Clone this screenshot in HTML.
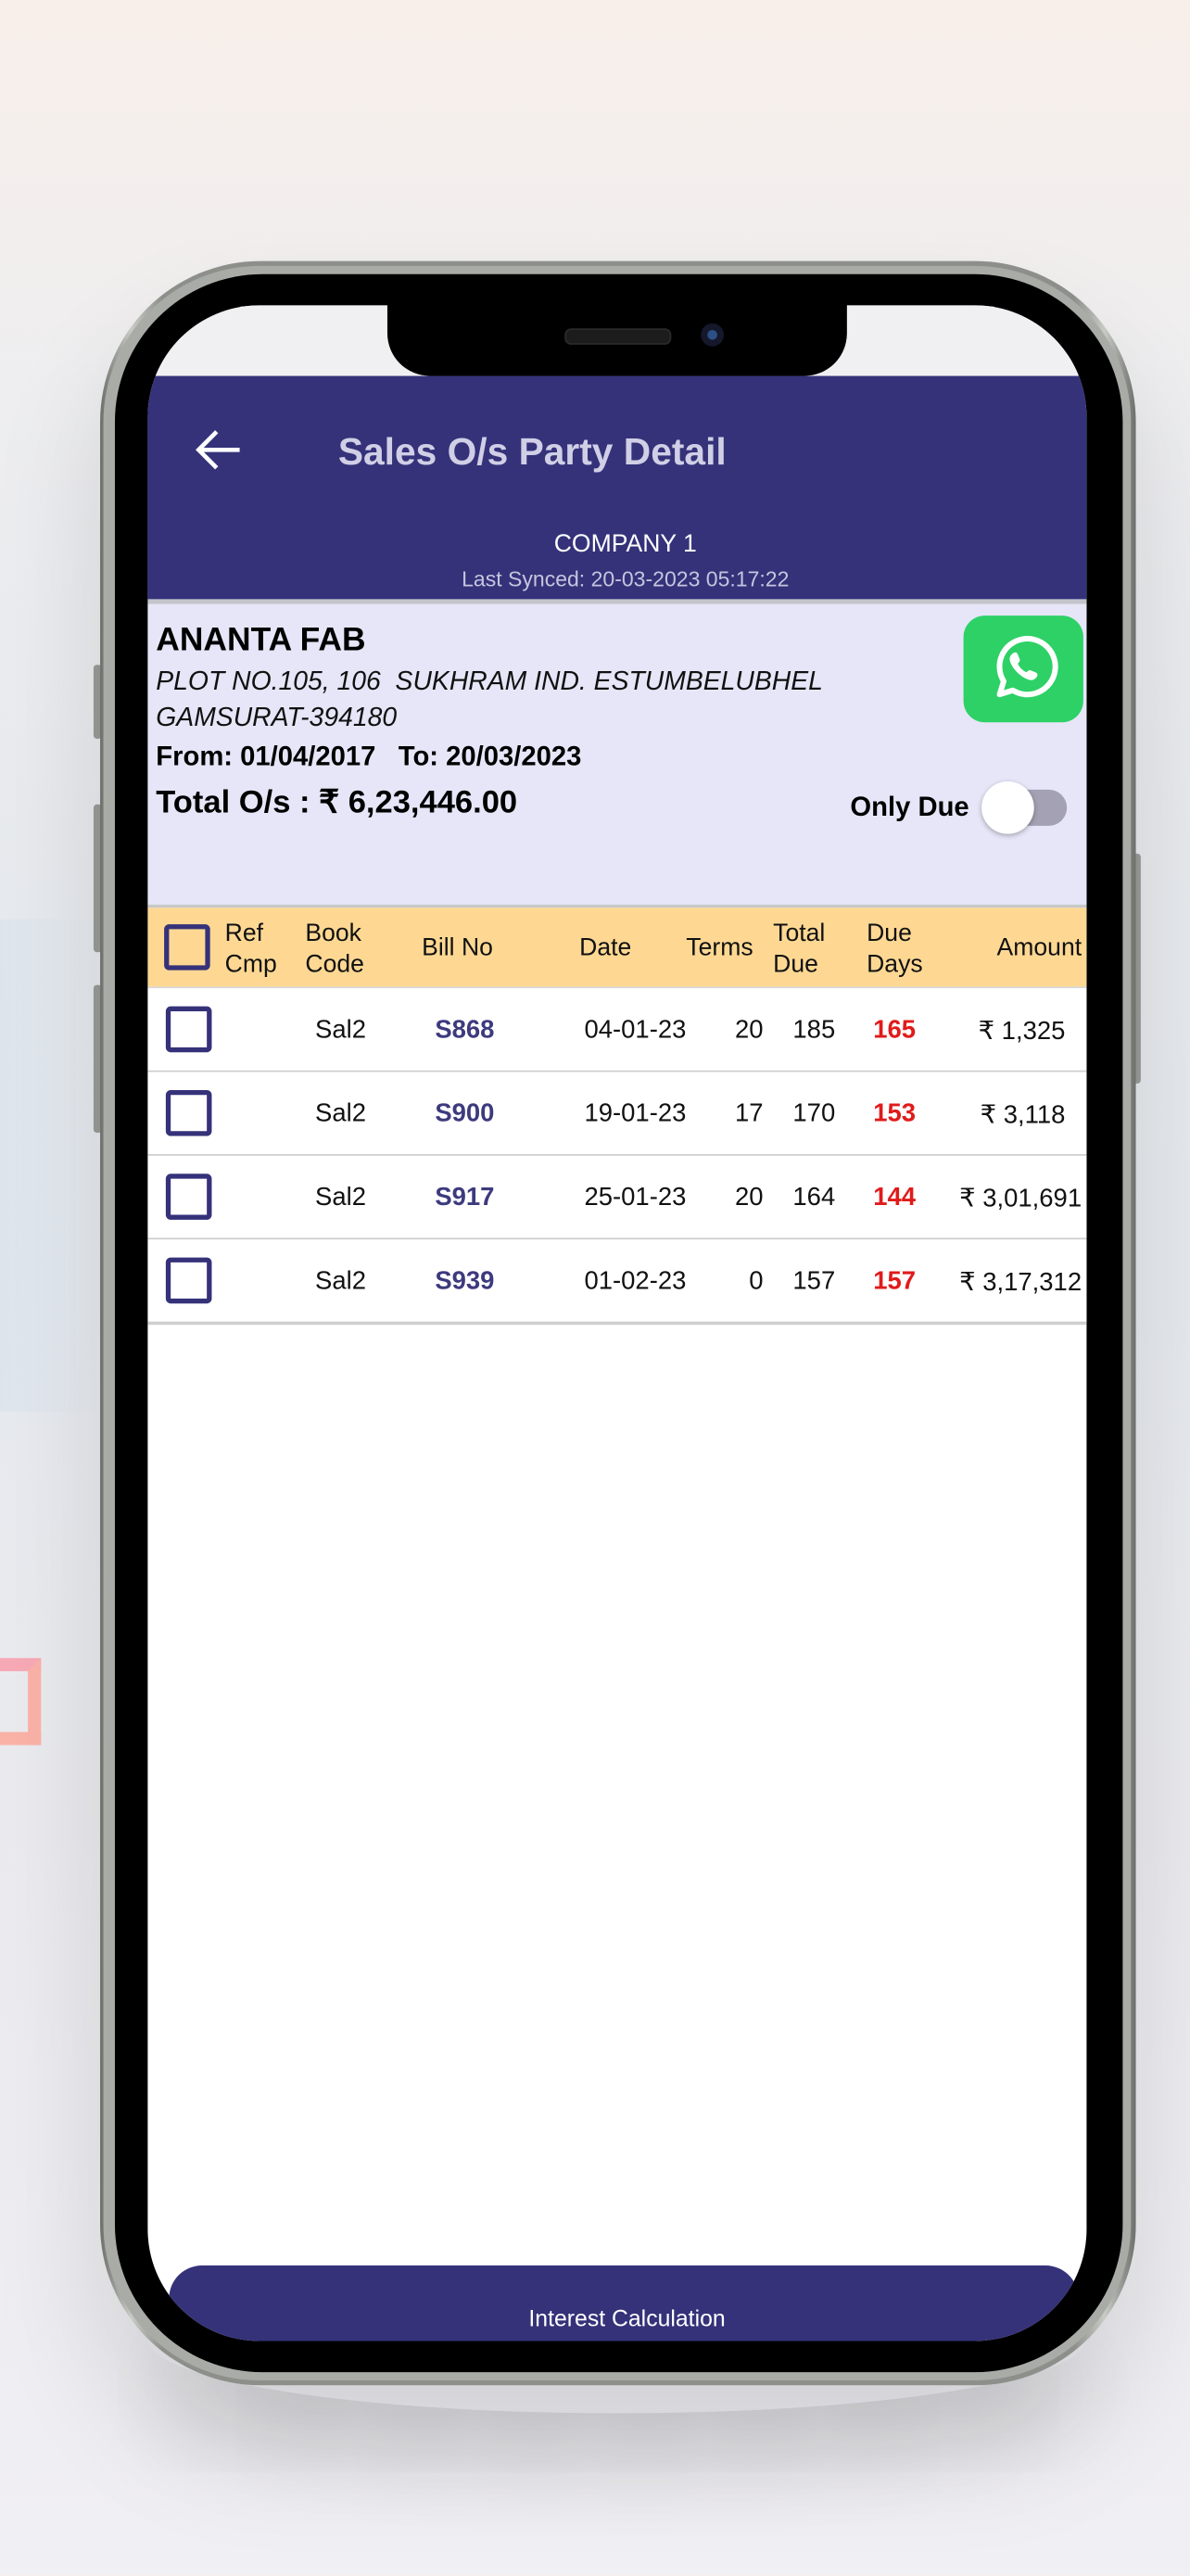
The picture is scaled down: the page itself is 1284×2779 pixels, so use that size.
<!DOCTYPE html>
<html><head><meta charset="utf-8"><style>
html,body{margin:0;padding:0;}
body{width:1284px;height:2778px;overflow:hidden;position:relative;font-family:"Liberation Sans",sans-serif;
background:linear-gradient(180deg,#f8efea 0%,#eeeef0 15%,#e7eaee 35%,#e6eaef 50%,#ebebef 70%,#f0eff3 100%);}
#s{position:absolute;left:0;top:0;width:725px;height:1569px;transform:scale(1.77103);transform-origin:0 0;}
.abs{position:absolute;}
.t{position:absolute;white-space:nowrap;}
.cb{position:absolute;width:22px;height:22px;border:3px solid #35327a;border-radius:3px;box-sizing:content-box;}
.row{position:absolute;left:0;width:572px;height:50px;border-bottom:2px solid #cfcfcf;background:#fff;}
.row .t{font-size:15.5px;top:17px;color:#111;}
</style></head><body><div id="s">
<!-- bg accent -->
<div class="abs" style="left:-20px;top:1010px;width:29px;height:37px;border:8px solid #fbb3a8;border-top-color:#f8a9b6;"></div>
<div class="abs" style="left:0;top:560px;width:60px;height:300px;background:linear-gradient(90deg,rgba(205,222,235,.35),rgba(230,235,240,0));"></div>
<!-- shadow -->
<div class="abs" style="left:90px;top:1380px;width:572px;height:90px;border-radius:50%;box-shadow:0 30px 60px rgba(0,0,0,.12);"></div>
<!-- side buttons -->
<div class="abs" style="left:57px;top:405px;width:5px;height:45px;background:#9a9c98;border-radius:2px"></div>
<div class="abs" style="left:57px;top:490px;width:5px;height:90px;background:#9a9c98;border-radius:2px"></div>
<div class="abs" style="left:57px;top:600px;width:5px;height:90px;background:#9a9c98;border-radius:2px"></div>
<div class="abs" style="left:690px;top:520px;width:5px;height:140px;background:#9a9c98;border-radius:2px"></div>
<!-- frame -->
<div class="abs" style="left:60.5px;top:159px;width:631px;height:1294px;border-radius:98px;background:linear-gradient(90deg,#6d6f6b,#c8cac5 3%,#8d8f8a 6%,#8d8f8a 94%,#c8cac5 97%,#6d6f6b);box-shadow:0 40px 70px rgba(0,0,0,.12);"></div>
<div class="abs" style="left:63px;top:162px;width:626px;height:1288px;border-radius:95px;background:#a9aba6;"></div>
<div class="abs" style="left:69.5px;top:167px;width:614px;height:1278px;border-radius:90px;background:#000;"></div>
<!-- screen -->
<div class="abs" style="left:90px;top:186px;width:572px;height:1240px;border-radius:68px;overflow:hidden;background:#fff;">
  <div class="abs" style="left:0;top:0;width:572px;height:43px;background:#f0f0f2"></div>
  <div class="abs" style="left:0;top:43px;width:572px;height:136px;background:#35327a"></div>
  <svg class="abs" style="left:28px;top:75px" width="30" height="26" viewBox="0 0 30 26"><path d="M28 13H4M14 2L3 13l11 11" fill="none" stroke="#fff" stroke-width="2.6"/></svg>
  <div class="t" style="left:116px;top:76px;font-size:23px;font-weight:bold;color:#d0cfe6;">Sales O/s Party Detail</div>
  <div class="t" style="left:0;width:582px;text-align:center;top:137px;font-size:15px;color:#fff;">COMPANY 1</div>
  <div class="t" style="left:0;width:582px;text-align:center;top:159px;font-size:13px;color:#c6c5dd;">Last Synced: 20-03-2023 05:17:22</div>
  <div class="abs" style="left:0;top:179px;width:572px;height:3px;background:#c4c4cc"></div>
  <div class="abs" style="left:0;top:182px;width:572px;height:183px;background:#e6e6f8"></div>
  <div class="t" style="left:5px;top:193px;font-size:20px;font-weight:bold;color:#000;">ANANTA FAB</div>
  <div class="t" style="left:5px;top:221px;font-size:16px;font-style:italic;color:#111;">PLOT NO.105, 106 &nbsp;SUKHRAM IND. ESTUMBELUBHEL</div>
  <div class="t" style="left:5px;top:243px;font-size:16px;font-style:italic;color:#111;">GAMSURAT-394180</div>
  <div class="t" style="left:5px;top:266px;font-size:16.5px;font-weight:bold;color:#000;">From: 01/04/2017 &nbsp;&nbsp;To: 20/03/2023</div>
  <div class="t" style="left:5px;top:291px;font-size:19.5px;font-weight:bold;color:#000;">Total O/s : ₹ 6,23,446.00</div>
  <div class="abs" style="left:497px;top:189px;width:73px;height:65px;border-radius:13px;background:#2dd166"></div>
  <svg class="abs" style="left:510px;top:198px" width="46" height="46" viewBox="0 0 46 46"><path d="M9 39l2.5-8A17 17 0 1 1 17 36.5Z" fill="none" stroke="#fff" stroke-width="3.4" stroke-linejoin="round"/><path d="M16.5 14.5c1.5-1.5 3-1.5 3.6.2l1.2 3c.3.8-.4 1.700-1.2 2.5.9 2.2 3 4.3 5.3 5.3.8-.8 1.6-1.5 2.4-1.2l3 1.2c1.7.6 1.7 2.2.2 3.6-1.7 1.7-4 1.6-7.6-.6-2.6-1.7-5-4-6.6-6.6-2.1-3.5-2.2-5.7-.3-7.4Z" fill="#fff"/></svg>
  <div class="t" style="left:428px;top:297px;font-size:16.5px;font-weight:bold;color:#000;">Only Due</div>
  <div class="abs" style="left:510px;top:295px;width:50px;height:22px;border-radius:11px;background:#a3a1b3"></div>
  <div class="abs" style="left:508px;top:290px;width:32px;height:32px;border-radius:50%;background:#fff;box-shadow:0 1px 3px rgba(0,0,0,.3)"></div>
  <div class="abs" style="left:0;top:365px;width:572px;height:2px;background:#c8c8c8"></div>
  <div class="abs" style="left:0;top:367px;width:572px;height:48px;background:#fed893"></div>
  <div class="cb" style="left:10px;top:377px;"></div>
  <div class="t" style="left:47px;top:373px;font-size:15px;line-height:19px;color:#111;">Ref<br>Cmp</div>
  <div class="t" style="left:96px;top:373px;font-size:15px;line-height:19px;color:#111;">Book<br>Code</div>
  <div class="t" style="left:167px;top:383px;font-size:15px;color:#111;">Bill No</div>
  <div class="t" style="left:263px;top:383px;font-size:15px;color:#111;">Date</div>
  <div class="t" style="left:328px;top:383px;font-size:15px;color:#111;">Terms</div>
  <div class="t" style="left:381px;top:373px;font-size:15px;line-height:19px;color:#111;">Total<br>Due</div>
  <div class="t" style="left:438px;top:373px;font-size:15px;line-height:19px;color:#111;">Due<br>Days</div>
  <div class="t" style="right:3px;top:383px;font-size:15px;color:#111;">Amount</div>
  <div class="abs" style="left:0;top:415px;width:572px;height:1px;background:#d8d8d8"></div>
  <div class="row" style="top:416px"><div class="cb" style="left:11px;top:11px"></div><div class="t" style="left:102px">Sal2</div><div class="t" style="left:175px;font-weight:bold;color:#3d3a7e">S868</div><div class="t" style="left:266px">04-01-23</div><div class="t" style="right:197px">20</div><div class="t" style="left:393px">185</div><div class="t" style="left:442px;font-weight:bold;color:#e01b1b">165</div><div class="t" style="right:13px">₹ 1,325</div></div>
  <div class="row" style="top:467px"><div class="cb" style="left:11px;top:11px"></div><div class="t" style="left:102px">Sal2</div><div class="t" style="left:175px;font-weight:bold;color:#3d3a7e">S900</div><div class="t" style="left:266px">19-01-23</div><div class="t" style="right:197px">17</div><div class="t" style="left:393px">170</div><div class="t" style="left:442px;font-weight:bold;color:#e01b1b">153</div><div class="t" style="right:13px">₹ 3,118</div></div>
  <div class="row" style="top:518px"><div class="cb" style="left:11px;top:11px"></div><div class="t" style="left:102px">Sal2</div><div class="t" style="left:175px;font-weight:bold;color:#3d3a7e">S917</div><div class="t" style="left:266px">25-01-23</div><div class="t" style="right:197px">20</div><div class="t" style="left:393px">164</div><div class="t" style="left:442px;font-weight:bold;color:#e01b1b">144</div><div class="t" style="right:3px">₹ 3,01,691</div></div>
  <div class="row" style="top:569px"><div class="cb" style="left:11px;top:11px"></div><div class="t" style="left:102px">Sal2</div><div class="t" style="left:175px;font-weight:bold;color:#3d3a7e">S939</div><div class="t" style="left:266px">01-02-23</div><div class="t" style="right:197px">0</div><div class="t" style="left:393px">157</div><div class="t" style="left:442px;font-weight:bold;color:#e01b1b">157</div><div class="t" style="right:3px">₹ 3,17,312</div></div>
  <div class="abs" style="left:13px;top:1194px;width:554px;height:60px;border-radius:20px;background:#35327a"></div>
  <div class="t" style="left:0;width:584px;text-align:center;top:1218px;font-size:14px;color:#fff;">Interest Calculation</div>
</div>
<div class="abs" style="left:236px;top:180px;width:280px;height:49px;background:#000;border-radius:0 0 26px 26px"></div>
<div class="abs" style="left:344px;top:200px;width:63px;height:8px;border-radius:4px;background:#1c1c1c;border:1px solid #2a2a2a"></div>
<div class="abs" style="left:427px;top:197px;width:14px;height:14px;border-radius:50%;background:#15182a"></div>
<div class="abs" style="left:431px;top:201px;width:6px;height:6px;border-radius:50%;background:#2b4f86"></div>
</div></body></html>
